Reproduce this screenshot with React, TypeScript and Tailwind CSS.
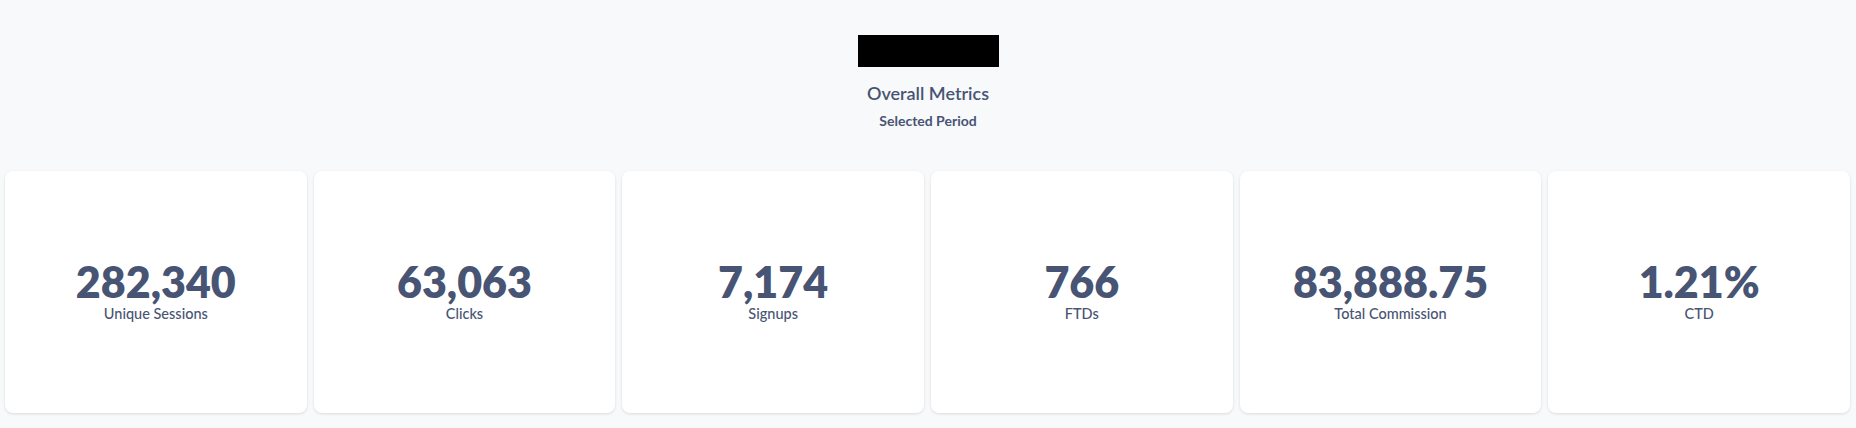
import { FC } from "react";

type Metric = {
  value: string;
  label: string;
};

const metrics: Metric[] = [
  { value: "282,340", label: "Unique Sessions" },
  { value: "63,063", label: "Clicks" },
  { value: "7,174", label: "Signups" },
  { value: "766", label: "FTDs" },
  { value: "83,888.75", label: "Total Commission" },
  { value: "1.21%", label: "CTD" },
];

const MetricCard: FC<Metric> = ({ value, label }) => {
  return (
    <div className="bg-white rounded-lg shadow-[0_1px_3px_rgba(0,0,0,0.12)] h-[242px] flex flex-col items-center justify-center">
      <p className="text-[43px] leading-none font-extrabold">{value}</p>
      <p className="mt-[1px] text-[14.5px] leading-5 font-medium">{label}</p>
    </div>
  );
};

export default function App() {
  return (
    <div
      className="min-h-[428px] bg-[#f8f9fb] text-[#485473] pt-[35px]"
      style={{ fontFamily: "Lato, 'Noto Sans', sans-serif" }}
    >
      <div className="flex flex-col items-center">
        <div className="w-[141px] h-[32px] bg-black" />
        <h2 className="mt-3 text-[18px] leading-7 font-semibold">
          Overall Metrics
        </h2>
        <p className="mt-1 text-sm leading-5 font-bold">Selected Period</p>
      </div>

      <div className="mt-[40px] grid grid-cols-6 gap-[7px] pl-[5px] pr-[6px]">
        {metrics.map((m) => (
          <MetricCard key={m.label} value={m.value} label={m.label} />
        ))}
      </div>
    </div>
  );
}
